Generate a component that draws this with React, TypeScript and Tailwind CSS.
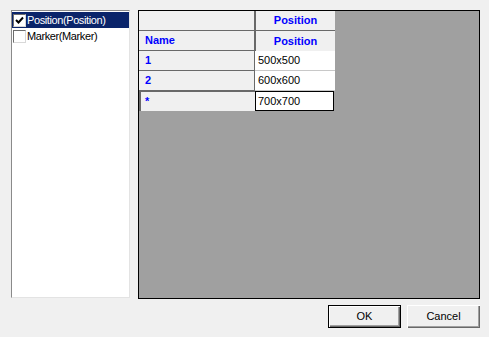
import React from "react";

const font = { fontFamily: '"Liberation Sans", Arial, sans-serif' };

const Check = ({ checked }: { checked: boolean }) => (
  <span className="flex h-[13px] w-[13px] shrink-0 items-center justify-center border border-t-[#6d6d6d] border-l-[#6d6d6d] border-r-[#d8d8d8] border-b-[#d8d8d8] bg-white">
    {checked && (
      <svg width="9" height="9" viewBox="0 0 9 9">
        <path d="M1 4 L3.5 6.5 L8 1.5" fill="none" stroke="#000" strokeWidth="2" />
      </svg>
    )}
  </span>
);

const items = [
  { label: "Position(Position)", checked: true, selected: true },
  { label: "Marker(Marker)", checked: false, selected: false },
];

const rows = [
  { head: "1", value: "500x500" },
  { head: "2", value: "600x600" },
  { head: "*", value: "700x700", active: true },
];

export default function App() {
  return (
    <div
      className="flex h-[337px] w-[489px] flex-col bg-[#f0f0f0] pl-[11px] pr-[9px] pt-[10px] text-[11px]"
      style={font}
    >
      <div className="flex h-[289px] gap-[8px]">
        {/* list */}
        <div className="h-[288px] w-[119px] border border-t-[#8a8a8a] border-l-[#8a8a8a] border-r-[#e3e3e3] border-b-[#e3e3e3] bg-white pt-[1px]">
          {items.map((it) => (
            <div
              key={it.label}
              className={`flex h-[16px] items-center gap-[1px] pl-[1px] ${
                it.selected ? "bg-[#0a246a] text-white" : "text-black"
              }`}
            >
              <Check checked={it.checked} />
              <span className="leading-none tracking-[-0.4px]">{it.label}</span>
            </div>
          ))}
        </div>

        {/* grid */}
        <div className="flex-1 border border-black bg-[#a0a0a0]">
          <div className="grid grid-cols-[116px_80px] font-bold text-[#0000ff]">
            <div className="h-[20px] border-r border-b border-r-[#696969] border-b-[#696969] bg-[#f0f0f0]" />
            <div className="flex h-[20px] items-center justify-center border-l border-b border-l-[#696969] border-b-[#696969] bg-[#f0f0f0]">
              Position
            </div>
            <div className="flex h-[20px] items-center border-r border-b border-r-[#696969] border-b-[#696969] bg-[#f0f0f0] pl-[6px]">
              Name
            </div>
            <div className="flex h-[20px] items-center justify-center border-l border-l-[#696969] bg-[#f0f0f0]">
              Position
            </div>
            {rows.map((r) => (
              <React.Fragment key={r.head}>
                <div
                  className={`flex h-[20px] items-center bg-[#f0f0f0] ${
                    r.active
                      ? "border-l-2 border-t border-l-[#696969] border-t-[#696969] pl-[4px]"
                      : "border-r border-b border-r-[#696969] border-b-[#696969] pl-[6px]"
                  }`}
                >
                  {r.head}
                </div>
                <div
                  className={`flex h-[20px] items-center bg-white font-normal text-black ${
                    r.active
                      ? "mb-[-1px] mr-[1px] border border-black pl-[2px]"
                      : "border-b border-b-[#c8c8c8] pl-[3px]"
                  }`}
                >
                  {r.value}
                </div>
              </React.Fragment>
            ))}
          </div>
        </div>
      </div>

      <div className="mt-[6px] flex justify-end gap-[6px]">
        <button className="flex h-[23px] w-[73px] items-center justify-center border border-black bg-[#f0f0f0] text-[11px] text-black shadow-[inset_1px_1px_0_#fff,inset_-1px_-1px_0_#696969,inset_-2px_-2px_0_#a0a0a0]">
          OK
        </button>
        <button className="flex h-[23px] w-[73px] items-center justify-center bg-[#f0f0f0] text-[11px] text-black shadow-[inset_1px_1px_0_#fff,inset_-1px_-1px_0_#696969,inset_-2px_-2px_0_#a0a0a0]">
          Cancel
        </button>
      </div>
    </div>
  );
}
